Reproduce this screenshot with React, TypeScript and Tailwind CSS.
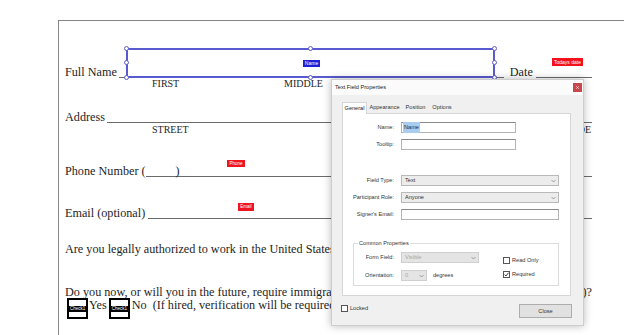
import React from "react";

function Line({ className = "" }: { className?: string }) {
  return <div className={`h-[13px] border-b border-[#6b6b6b] ${className}`} />;
}

function Chevron() {
  return (
    <svg width="5" height="4" viewBox="0 0 5 4" className="shrink-0">
      <polyline points="0.5,1 2.5,3 4.5,1" fill="none" stroke="#8a8a8a" strokeWidth="0.8" />
    </svg>
  );
}

function Handle({ className }: { className: string }) {
  return <div className={`absolute w-[5px] h-[5px] rounded-full bg-white border border-[#5a5ad0] ${className}`} />;
}

function CheckField() {
  return (
    <div className="w-[21px] h-[21px] border-2 border-black bg-white flex items-center shrink-0">
      <div className="w-full h-[6px] bg-black text-white text-[4.5px] leading-[6px] font-['Liberation_Sans',sans-serif] overflow-hidden whitespace-nowrap pl-px">
        Check1
      </div>
    </div>
  );
}

function Input({ w, children }: { w: string; children?: React.ReactNode }) {
  return (
    <div className={`${w} h-[11px] bg-white border border-[#b4b4b4] border-t-[#8a8a8a] flex items-center pl-[1px]`}>
      {children}
    </div>
  );
}

function Select({ w, value, disabled = false }: { w: string; value: string; disabled?: boolean }) {
  return (
    <div
      className={`${w} h-[11px] border flex items-center justify-between pl-[3px] pr-[2px] ${
        disabled ? "bg-[#e4e4e4] border-[#cfcfcf] text-[#a8a8a8]" : "bg-[#ececec] border-[#b9b9b9] text-[#333]"
      }`}
    >
      <span>{value}</span>
      <Chevron />
    </div>
  );
}

function Check({ checked = false }: { checked?: boolean }) {
  return (
    <div className="w-[7px] h-[7px] border border-[#555] bg-white flex items-center justify-center shrink-0">
      {checked && (
        <svg width="5" height="5" viewBox="0 0 5 5">
          <polyline points="0.6,2.6 2,4 4.4,0.8" fill="none" stroke="#333" strokeWidth="0.9" />
        </svg>
      )}
    </div>
  );
}

export default function App() {
  return (
    <div className="relative w-[624px] h-[335px] overflow-hidden bg-white">
      {/* page sheet */}
      <div className="pt-[20px] pl-[58px]">
        <div className="h-[315px] border-l border-t border-[#858585] pl-[6px] pr-[32px] font-['Liberation_Serif',serif] text-[#1e1e1e] whitespace-nowrap">
          {/* Full Name */}
          <div className="mt-[44px] flex items-start h-[14px] leading-[14px] text-[12.2px]">
            <span>Full Name</span>
            <Line className="ml-[2px] w-[385px]" />
            <span className="ml-[6px]">Date</span>
            <Line className="ml-[3px] flex-1" />
          </div>
          <div className="mt-[1px] flex items-start h-[8px] leading-[8px] text-[10px] pl-[87px]">
            <span className="w-[132px]">FIRST</span>
            <span className="w-[150px]">MIDDLE</span>
            <span>LAST</span>
          </div>
          {/* Address */}
          <div className="mt-[22px] flex items-start h-[14px] leading-[14px] text-[12.2px]">
            <span>Address</span>
            <Line className="ml-[2px] flex-1" />
          </div>
          <div className="mt-[2px] flex items-start h-[8px] leading-[8px] text-[10px] pl-[87px]">
            <span>STREET</span>
            <span className="flex-1" />
            <span className="pr-[1px]">ZIP CODE</span>
          </div>
          {/* Phone */}
          <div className="mt-[30px] flex items-start h-[14px] leading-[14px] text-[12.2px]">
            <span>Phone Number (</span>
            <div className="h-[13px] border-b border-[#6b6b6b] pl-[30px]">)</div>
            <Line className="flex-1" />
          </div>
          {/* Email */}
          <div className="mt-[28px] flex items-start h-[14px] leading-[14px] text-[12.2px]">
            <span>Email (optional)</span>
            <Line className="ml-[3px] flex-1" />
          </div>
          <div className="mt-[22px] flex items-start h-[14px] leading-[14px] text-[12.2px]">
            <span>Are you legally authorized to work in the United States?</span>
          </div>
          <div className="mt-[29px] flex items-start justify-between h-[12px] leading-[14px] text-[12.2px]">
            <span>Do you now, or will you in the future, require immigration sponsorship for employment</span>
            <span>)?</span>
          </div>
          <div className="mt-[1px] flex items-start leading-[14px] text-[12.2px]">
            <div className="ml-[2px]">
              <CheckField />
            </div>
            <span className="ml-px">Yes</span>
            <div className="ml-[2px]">
              <CheckField />
            </div>
            <span className="ml-[2px]">No</span>
            <span className="ml-[6px]">(If hired, verification will be required</span>
          </div>
        </div>
      </div>

      {/* selected field overlay */}
      <div className="absolute left-[126px] top-[48px] w-[369px] h-[30px] border-2 border-[#5a5ad0]">
        <Handle className="left-[-4px] top-[-4px]" />
        <Handle className="left-[180px] top-[-4px]" />
        <Handle className="right-[-4px] top-[-4px]" />
        <Handle className="left-[-4px] top-[10px]" />
        <Handle className="right-[-4px] top-[10px]" />
        <Handle className="left-[-4px] bottom-[-4px]" />
        <Handle className="left-[180px] bottom-[-4px]" />
        <Handle className="right-[-4px] bottom-[-4px]" />
      </div>
      <div className="absolute left-[303px] top-[60px] w-[17px] h-[7px] bg-[#1f1fd6] text-white text-[5px] leading-[7px] text-center font-['Liberation_Sans',sans-serif]">
        Name
      </div>
      <div className="absolute left-[552px] top-[58px] w-[31px] h-[8px] bg-[#f2101a] text-white text-[5px] leading-[8px] text-center font-['Liberation_Sans',sans-serif]">
        Todays date
      </div>
      <div className="absolute left-[227px] top-[160px] w-[18px] h-[7px] bg-[#ee1520] text-white text-[4.5px] leading-[7px] text-center font-['Liberation_Sans',sans-serif]">
        Phone
      </div>
      <div className="absolute left-[238px] top-[203px] w-[16px] h-[8px] bg-[#ee1520] text-white text-[4.5px] leading-[8px] text-center font-['Liberation_Sans',sans-serif]">
        Email
      </div>

      {/* dialog */}
      <div className="absolute left-[331px] top-[79px] w-[253px] h-[247px] bg-[#f0f0f0] border border-[#cdcdcd] shadow-[0_0_8px_rgba(0,0,0,0.28)] flex flex-col font-['Liberation_Sans',sans-serif] text-[5.6px] text-[#333]">
        <div className="h-[15px] bg-[#fbfbfb] flex items-center justify-between pl-[3px] pr-px">
          <span className="text-[#222]">Text Field Properties</span>
          <div className="w-[9px] h-[9px] bg-[#c8474c] flex items-center justify-center">
            <svg width="3" height="3" viewBox="0 0 3 3">
              <path d="M0.3 0.3 L2.7 2.7 M2.7 0.3 L0.3 2.7" stroke="white" strokeWidth="0.7" />
            </svg>
          </div>
        </div>
        {/* tabs */}
        <div className="mt-[7px] ml-[10px] flex items-end h-[11px] leading-[11px]">
          <div className="relative z-10 w-[25px] h-[12px] -mb-px bg-white border border-b-0 border-[#d6d6d6] text-center text-[#222]">
            General
          </div>
          <div className="w-[35px] text-center">Appearance</div>
          <div className="w-[27px] text-center">Position</div>
          <div className="w-[26px] text-center">Options</div>
        </div>
        <div className="ml-[10px] w-[229px] h-[183px] bg-white border border-[#d6d6d6] flex flex-col leading-[11px]">
          <div className="mt-[8px] flex items-center h-[11px]">
            <span className="w-[51px] text-right">Name:</span>
            <div className="ml-[7px]">
              <Input w="w-[115px]">
                <span className="bg-[#a8cdf0] text-[#17324f] px-px">Name</span>
              </Input>
            </div>
          </div>
          <div className="mt-[6px] flex items-center h-[11px]">
            <span className="w-[51px] text-right">Tooltip:</span>
            <div className="ml-[7px]">
              <Input w="w-[115px]" />
            </div>
          </div>
          <div className="mt-[25px] flex items-center h-[11px]">
            <span className="w-[51px] text-right">Field Type:</span>
            <div className="ml-[7px]">
              <Select w="w-[158px]" value="Text" />
            </div>
          </div>
          <div className="mt-[6px] flex items-center h-[11px]">
            <span className="w-[51px] text-right">Participant Role:</span>
            <div className="ml-[7px]">
              <Select w="w-[158px]" value="Anyone" />
            </div>
          </div>
          <div className="mt-[6px] flex items-center h-[11px]">
            <span className="w-[51px] text-right">Signer&apos;s Email:</span>
            <div className="ml-[7px]">
              <Input w="w-[158px]" />
            </div>
          </div>
          {/* group */}
          <div className="relative mt-[23px] ml-[10px] w-[206px] h-[43px] border border-[#dcdcdc] flex">
            <span className="absolute left-[4px] top-[-6px] bg-white px-px">Common Properties</span>
            <div className="w-[125px] flex flex-col">
              <div className="mt-[8px] flex items-center h-[11px]">
                <span className="w-[40px] text-right">Form Field:</span>
                <div className="ml-[7px]">
                  <Select w="w-[78px]" value="Visible" disabled />
                </div>
              </div>
              <div className="mt-[7px] flex items-center h-[11px]">
                <span className="w-[40px] text-right">Orientation:</span>
                <div className="ml-[7px]">
                  <Select w="w-[26px]" value="0" disabled />
                </div>
                <span className="ml-[6px]">degrees</span>
              </div>
            </div>
            <div className="ml-[24px] flex flex-col">
              <div className="mt-[12px] flex items-center h-[9px]">
                <Check />
                <span className="ml-[2px]">Read Only</span>
              </div>
              <div className="mt-[5px] flex items-center h-[9px]">
                <Check checked />
                <span className="ml-[2px]">Required</span>
              </div>
            </div>
          </div>
        </div>
        <div className="mt-[8px] flex items-start justify-between pl-[9px] pr-[11px]">
          <div className="mt-px flex items-center h-[7px]">
            <Check />
            <span className="ml-[2px]">Locked</span>
          </div>
          <div className="w-[53px] h-[14px] bg-[#e1e1e1] border border-[#adadad] flex items-center justify-center">
            Close
          </div>
        </div>
      </div>
    </div>
  );
}
